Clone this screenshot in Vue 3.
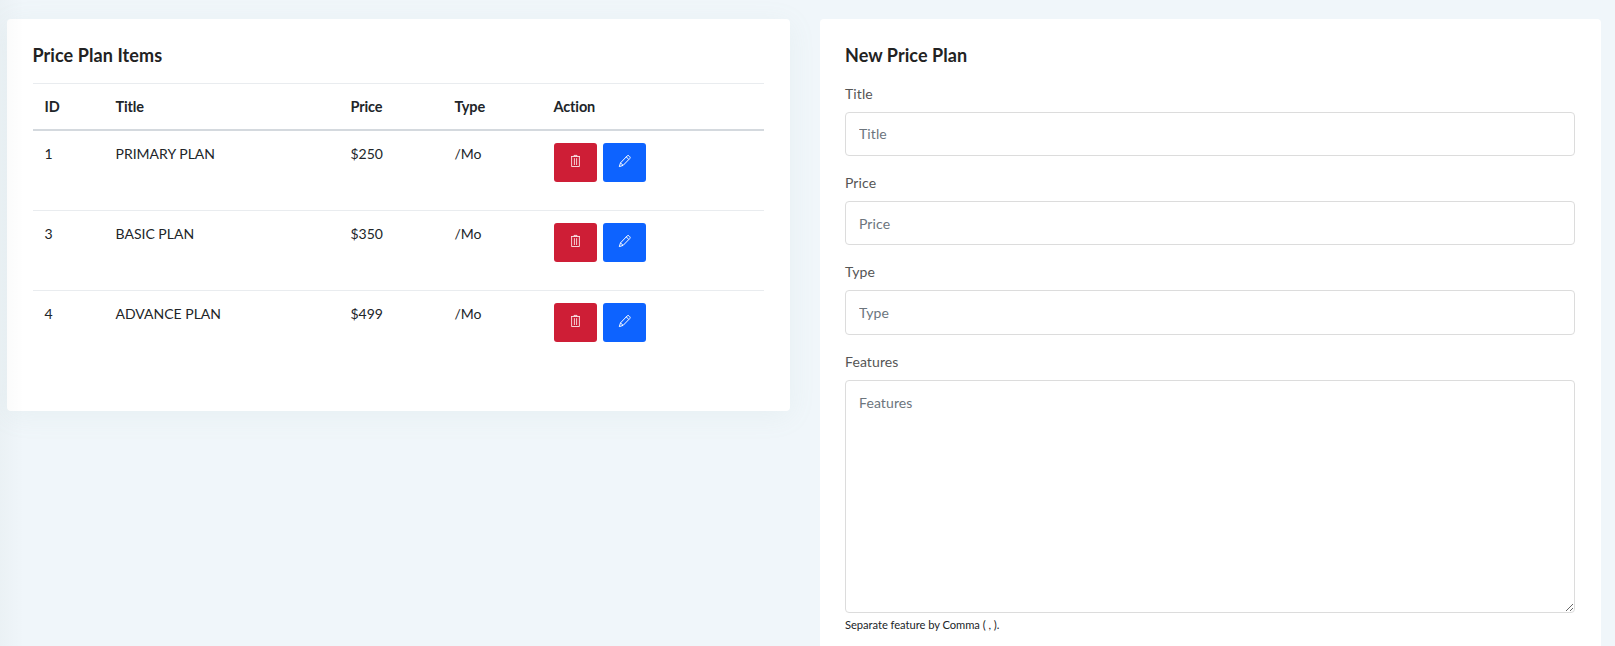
<script setup>
import { ref } from 'vue'

const plans = ref([
  { id: 1, title: 'PRIMARY PLAN', price: '$250', type: '/Mo' },
  { id: 3, title: 'BASIC PLAN', price: '$350', type: '/Mo' },
  { id: 4, title: 'ADVANCE PLAN', price: '$499', type: '/Mo' },
])

const fields = ['Title', 'Price', 'Type']
</script>

<template>
  <main class="page">
    <section class="card list-card">
      <h4>Price Plan Items</h4>
      <table>
        <colgroup>
          <col class="c-id" /><col class="c-title" /><col class="c-price" /><col class="c-type" /><col />
        </colgroup>
        <thead>
          <tr><th>ID</th><th>Title</th><th>Price</th><th>Type</th><th>Action</th></tr>
        </thead>
        <tbody>
          <tr v-for="plan in plans" :key="plan.id">
            <td>{{ plan.id }}</td>
            <td>{{ plan.title }}</td>
            <td>{{ plan.price }}</td>
            <td>{{ plan.type }}</td>
            <td>
              <div class="actions">
                <button class="btn danger" type="button" aria-label="Delete">
                  <svg width="15" height="14" viewBox="0 0 15 14">
                    <path d="M3 2.5H12M6 2.3V1.4H9V2.3M3.6 2.8V12.5H11.4V2.8M6.4 4.2V11M8.6 4.2V11" />
                  </svg>
                </button>
                <button class="btn primary" type="button" aria-label="Edit">
                  <svg class="pencil" width="15" height="14" viewBox="0 0 15 14">
                    <path d="M2.3 12.6L3.5 8.9L10.2 1.9Q11.1 1 12 1.9L12.8 2.7Q13.6 3.6 12.8 4.5L6.1 11.4ZM9.3 2.9L11.7 5.4M3.5 8.9L6.1 11.4" />
                  </svg>
                </button>
              </div>
            </td>
          </tr>
        </tbody>
      </table>
    </section>

    <section class="card form-card">
      <h4>New Price Plan</h4>
      <div v-for="name in fields" :key="name" class="group">
        <label :for="name">{{ name }}</label>
        <input :id="name" type="text" :placeholder="name" />
      </div>
      <div class="group">
        <label for="Features">Features</label>
        <textarea id="Features" placeholder="Features"></textarea>
        <small>Separate feature by Comma ( , ).</small>
      </div>
    </section>
    <div class="edge-shade"></div>
  </main>
</template>

<style>
body {
  background: #f0f6fa;
  overflow: hidden;
}
</style>

<style scoped>
* {
  box-sizing: border-box;
}
.page {
  position: relative;
  display: grid;
  grid-template-columns: 783px 781px;
  column-gap: 30px;
  align-items: start;
  height: 646px;
  padding: 19px 0 0 7px;
  overflow: hidden;
  background: #f0f6fa;
  color: #212529;
  font-family: Lato, sans-serif;
  font-size: 14px;
  font-variant-ligatures: none;
  line-height: 21px;
}
.edge-shade {
  position: absolute;
  inset: 0 auto 0 0;
  width: 24px;
  background: linear-gradient(to right, rgba(0, 30, 30, 0.025), rgba(0, 30, 30, 0));
  pointer-events: none;
}
.card {
  background: #fff;
  border-radius: 4px;
}
.list-card {
  height: 392px;
  padding: 25px 26px 25px 25.5px;
  box-shadow: 0 5px 28px 0 rgba(140, 175, 165, 0.09);
}
.form-card {
  position: relative;
  height: 700px;
  padding: 25px 26px 0 25px;
}
h4 {
  margin: 0;
  color: #222;
  font-size: 18px;
  font-weight: 700;
  letter-spacing: 0.08px;
  line-height: 22px;
}
table {
  width: 731px;
  margin-top: 17px;
  table-layout: fixed;
  border-spacing: 0;
  border-top: 1px solid #e9ecef;
}
.c-id { width: 71px; }
.c-title { width: 235px; }
.c-price { width: 104px; }
.c-type { width: 99px; }
th {
  height: 47px;
  padding: 0 12px 1px;
  border-bottom: 2px solid #d4d9de;
  font-size: 14.5px;
  font-weight: 700;
  letter-spacing: -0.14px;
  text-align: left;
}
td {
  height: 80px;
  padding: 12px;
  border-bottom: 1px solid #e9ecef;
  vertical-align: top;
}
tbody tr:last-child td {
  border-bottom: 0;
}
.actions {
  display: flex;
  gap: 6px;
}
.btn {
  display: flex;
  justify-content: center;
  width: 43px;
  height: 39px;
  padding: 11px 0 0;
  border: 0;
  border-radius: 3px;
}
.danger { background: #ce1e36; }
.primary { background: #0d63ff; }
.btn svg {
  fill: none;
  stroke: #fff;
  stroke-width: 0.8;
}
.btn .pencil {
  stroke-width: 1;
}
.group {
  display: flex;
  flex-direction: column;
  height: 89.2px;
}
h4 + .group {
  margin-top: 17px;
}
label {
  margin-bottom: 8px;
  color: #555;
  letter-spacing: 0.1px;
}
input,
textarea {
  width: 730px;
  margin: 0;
  border: 1px solid #dcdcdc;
  border-radius: 4px;
  outline: 0;
  background: #fff;
  font: inherit;
  letter-spacing: 0.1px;
}
input {
  height: 44.2px;
  padding: 0 13px;
}
h4 + .group input {
  padding-bottom: 1px;
}
textarea {
  flex: none;
  height: 233px;
  padding: 11px 13px;
}
input::placeholder,
textarea::placeholder {
  color: #6c757d;
  opacity: 1;
}
small {
  margin-top: 1px;
  font-size: 11.2px;
  letter-spacing: -0.05px;
}
</style>
